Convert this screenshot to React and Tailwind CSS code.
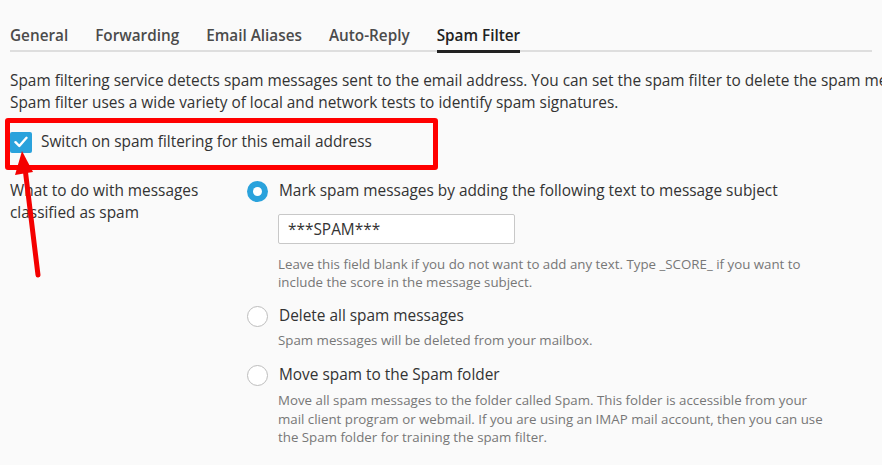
import React from 'react'

const tabs = ['General', 'Forwarding', 'Email Aliases', 'Auto-Reply', 'Spam Filter']

function Radio({ checked }) {
  if (checked) {
    return (
      <span className="flex h-[21px] w-[21px] shrink-0 items-center justify-center rounded-full bg-[#2aa2dc]">
        <span className="h-[9px] w-[9px] rounded-full bg-white" />
      </span>
    )
  }
  return <span className="h-[21px] w-[21px] shrink-0 rounded-full border border-[#bdbdbd] bg-white" />
}

function Option({ checked, label, children }) {
  return (
    <div>
      <label className="flex items-center gap-[11px] text-[15.4px] leading-[22px] text-[#333]">
        <Radio checked={checked} />
        <span>{label}</span>
      </label>
      <div className="pl-[31px]">{children}</div>
    </div>
  )
}

export default function App() {
  return (
    <div
      className="relative h-[465px] w-full overflow-hidden bg-[#fafafa] px-[10px] text-[#333]"
      style={{ fontFamily: '"Open Sans", "Noto Sans", sans-serif' }}
    >
      {/* Tabs */}
      <div className="flex gap-[27px] border-b-2 border-[#dedede] whitespace-nowrap">
        {tabs.map((tab) => {
          const active = tab === 'Spam Filter'
          return (
            <div
              key={tab}
              className={
                'relative pt-[25px] pb-[5px] text-[15.3px] font-semibold leading-[20px] ' +
                (active ? 'text-[#222]' : 'text-[#4b4b4b]')
              }
            >
              {tab}
              {active && <span className="absolute -bottom-[3px] left-0 right-0 h-[3px] bg-[#222]" />}
            </div>
          )
        })}
      </div>

      {/* Intro */}
      <div className="mt-[18px] text-[15.4px] leading-[22px] text-[#333]">
        <p className="whitespace-nowrap">
          Spam filtering service detects spam messages sent to the email address. You can set the spam filter to delete the spam messages or move them to a special folder.
        </p>
        <p className="whitespace-nowrap">Spam filter uses a wide variety of local and network tests to identify spam signatures.</p>
      </div>

      {/* Switch */}
      <div className="relative mt-[17px]">
        <label className="flex items-center gap-[9px] text-[15.4px] leading-[22px]">
          <span className="flex h-[21px] w-[22px] items-center justify-center rounded-[2px] bg-[#2aa2dc]">
            <svg width="14" height="12" viewBox="0 0 14 12" fill="none">
              <path d="M1.5 6.2 L5.3 10 L12.5 1.8" stroke="#fff" strokeWidth="2.4" strokeLinecap="round" strokeLinejoin="round" />
            </svg>
          </span>
          <span>Switch on spam filtering for this email address</span>
        </label>
        <div className="pointer-events-none absolute -left-[5px] -top-[13px] h-[52px] w-[433px] rounded-[3px] border-[5px] border-[#ff0000]" />
      </div>

      {/* Options */}
      <div className="mt-[27px] flex">
        <div className="w-[237px] shrink-0 text-[15.4px] leading-[22px] text-[#333]">
          What to do with messages
          <br />
          classified as spam
        </div>
        <div className="flex flex-col">
          <Option checked label="Mark spam messages by adding the following text to message subject">
            <input
              readOnly
              value="***SPAM***"
              className="mt-[12px] h-[30px] w-[237px] rounded-[2px] border border-[#c8c8c8] bg-white px-[9px] text-[15.4px] text-[#333] outline-none"
              style={{ fontFamily: '"Open Sans", sans-serif' }}
            />
            <p className="mt-[11px] w-[548px] text-[13.3px] leading-[18px] text-[#777]">
              Leave this field blank if you do not want to add any text. Type _SCORE_ if you want to include the score in the message subject.
            </p>
          </Option>
          <div className="mt-[14px]">
            <Option label="Delete all spam messages">
              <p className="mt-[4px] text-[13.3px] leading-[18px] text-[#777]">Spam messages will be deleted from your mailbox.</p>
            </Option>
          </div>
          <div className="mt-[15px]">
            <Option label="Move spam to the Spam folder">
              <p className="mt-[5px] w-[548px] text-[13.3px] leading-[18.5px] text-[#777]">
                Move all spam messages to the folder called Spam. This folder is accessible from your mail client program or webmail. If you are using an IMAP mail account, then you can use the Spam folder for training the spam filter.
              </p>
            </Option>
          </div>
        </div>
      </div>

      {/* Annotation arrow */}
      <svg className="pointer-events-none absolute left-0 top-0" width="60" height="290" viewBox="0 0 60 290">
        <line x1="25" y1="168" x2="38" y2="275" stroke="#f40000" strokeWidth="5" strokeLinecap="round" />
        <polygon points="22,151 15,175 33,172" fill="#f40000" />
      </svg>
    </div>
  )
}
